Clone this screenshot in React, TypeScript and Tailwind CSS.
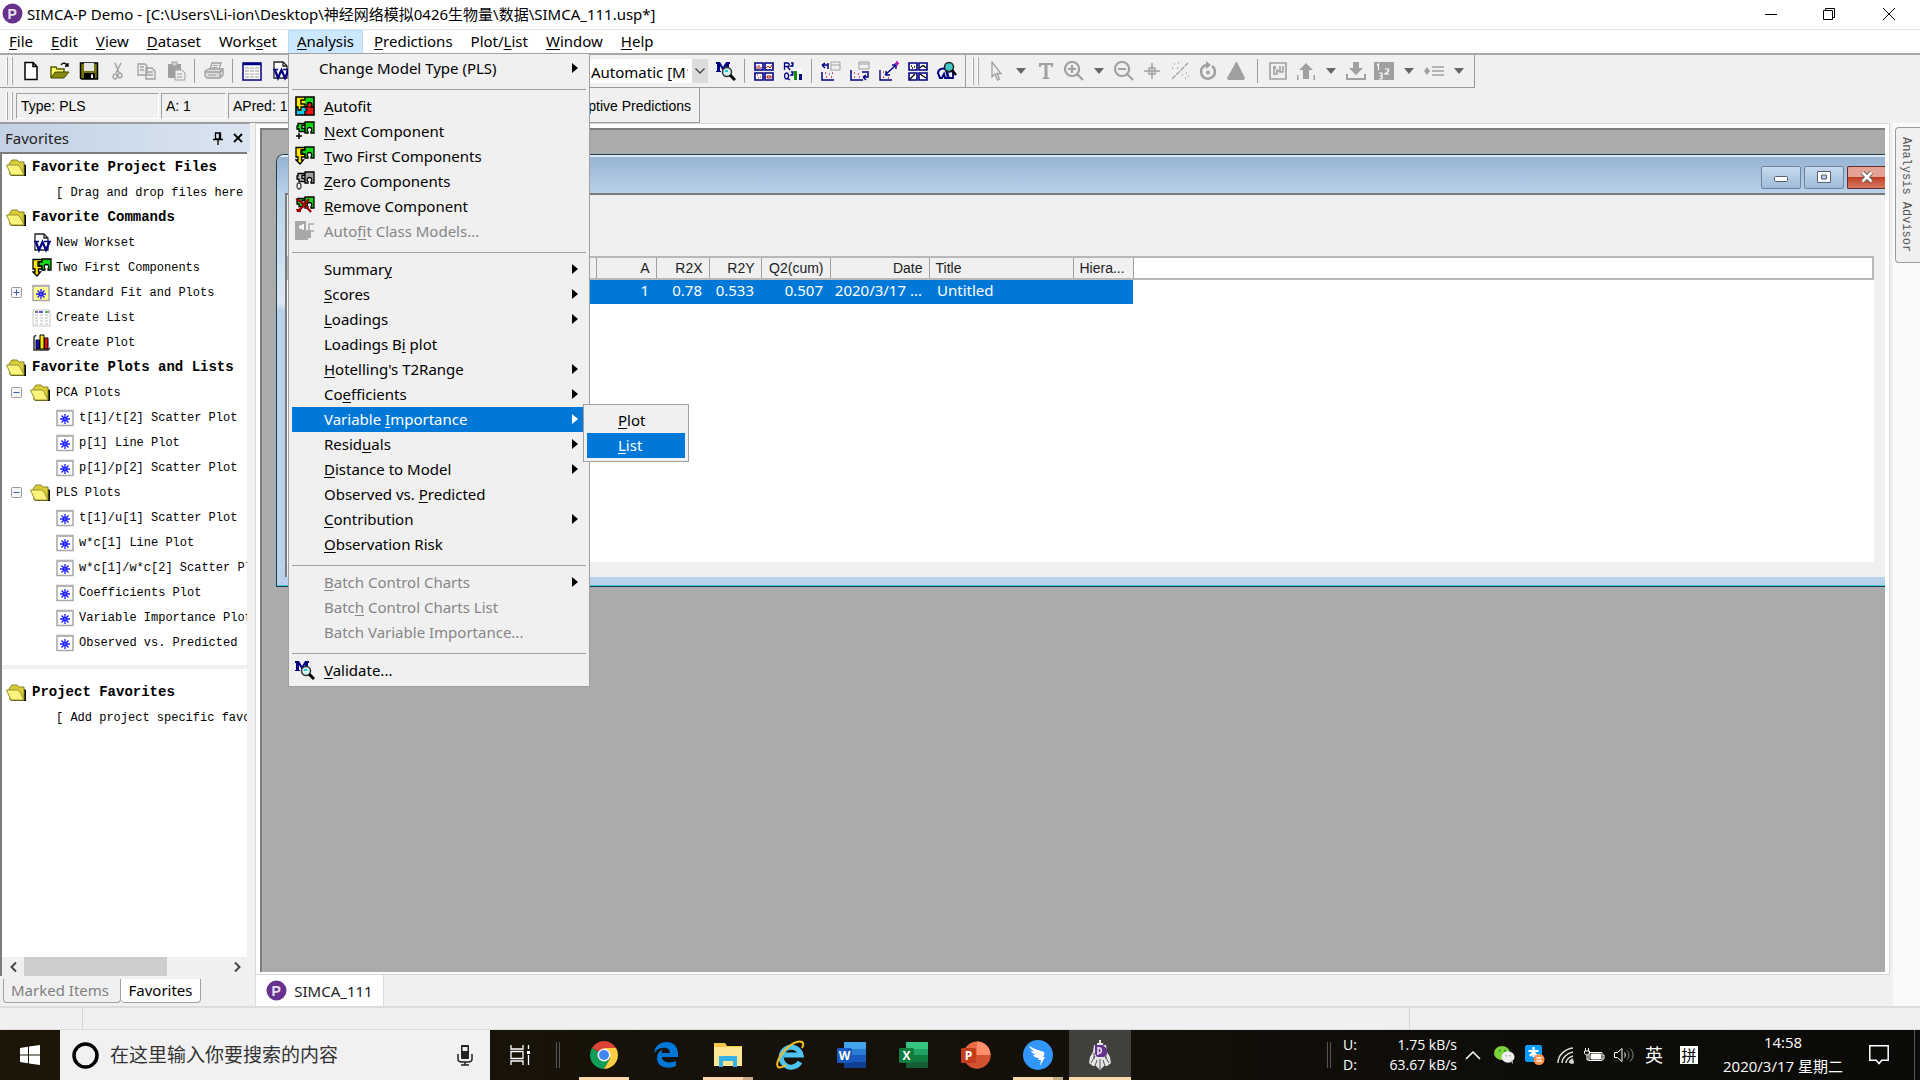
import type { ReactNode } from "react";
import clsx from "clsx";

const UI = "font-['Noto_Sans','Noto_Sans_CJK_SC',sans-serif]";
const NARROW = "font-['Liberation_Sans','Noto_Sans_CJK_SC',sans-serif]";
const MONO = "font-['Liberation_Mono','Noto_Sans_CJK_SC',monospace]";

/* ---------- data ---------- */

const MENUS = [
  "&File", "&Edit", "&View", "&Dataset", "Work&set", "&Analysis",
  "&Predictions", "Plot/&List", "&Window", "&Help",
];

type MenuItem = {
  label: string;
  icon?: ReactNode;
  sub?: boolean;
  disabled?: boolean;
  active?: boolean;
  outdent?: boolean;
};

const ANALYSIS_MENU: MenuItem[][] = [
  [{ label: "Change Model Type (PLS)", sub: true, outdent: true }],
  [
    { label: "&Autofit", icon: <PuzzleAll /> },
    { label: "&Next Component", icon: <PuzzleNext /> },
    { label: "&Two First Components", icon: <PuzzleTwo /> },
    { label: "&Zero Components", icon: <PuzzleZero /> },
    { label: "&Remove Component", icon: <PuzzleRemove /> },
    { label: "Auto&fit Class Models...", icon: <PuzzleClass />, disabled: true },
  ],
  [
    { label: "Summar&y", sub: true },
    { label: "&Scores", sub: true },
    { label: "&Loadings", sub: true },
    { label: "Loadings B&i plot" },
    { label: "&Hotelling's T2Range", sub: true },
    { label: "Co&efficients", sub: true },
    { label: "Variable &Importance", sub: true, active: true },
    { label: "Resid&uals", sub: true },
    { label: "&Distance to Model", sub: true },
    { label: "Observed vs. &Predicted" },
    { label: "&Contribution", sub: true },
    { label: "&Observation Risk" },
  ],
  [
    { label: "&Batch Control Charts", sub: true, disabled: true },
    { label: "Batc&h Control Charts List", disabled: true },
    { label: "Batch Variable Importance...", disabled: true },
  ],
  [{ label: "&Validate...", icon: <ModelLens /> }],
];

type TreeRow = {
  label: string;
  kind: "group" | "hint" | "command" | "folder" | "plot";
  icon?: ReactNode;
  toggle?: "plus" | "minus";
};

const FAVORITES: TreeRow[] = [
  { label: "Favorite Project Files", kind: "group" },
  { label: "[ Drag and drop files here ]", kind: "hint" },
  { label: "Favorite Commands", kind: "group" },
  { label: "New Workset", kind: "command", icon: <WorksetDoc /> },
  { label: "Two First Components", kind: "command", icon: <PuzzleTwo /> },
  { label: "Standard Fit and Plots", kind: "command", icon: <StarBox yellow />, toggle: "plus" },
  { label: "Create List", kind: "command", icon: <ListSheet /> },
  { label: "Create Plot", kind: "command", icon: <BarsIcon /> },
  { label: "Favorite Plots and Lists", kind: "group" },
  { label: "PCA Plots", kind: "folder", toggle: "minus" },
  { label: "t[1]/t[2] Scatter Plot", kind: "plot" },
  { label: "p[1] Line Plot", kind: "plot" },
  { label: "p[1]/p[2] Scatter Plot", kind: "plot" },
  { label: "PLS Plots", kind: "folder", toggle: "minus" },
  { label: "t[1]/u[1] Scatter Plot", kind: "plot" },
  { label: "w*c[1] Line Plot", kind: "plot" },
  { label: "w*c[1]/w*c[2] Scatter Plot", kind: "plot" },
  { label: "Coefficients Plot", kind: "plot" },
  { label: "Variable Importance Plot", kind: "plot" },
  { label: "Observed vs. Predicted", kind: "plot" },
];

const PROJECT_FAVORITES: TreeRow[] = [
  { label: "Project Favorites", kind: "group" },
  { label: "[ Add project specific favorites ]", kind: "hint" },
];

/* ---------- icons ---------- */

function Px({ children, size = 20 }: { children: ReactNode; size?: number }) {
  return (
    <svg width={size} height={size} viewBox="0 0 20 20" fill="none" className="shrink-0" aria-hidden="true">
      {children}
    </svg>
  );
}

function Piece({ left, right }: { left: string; right: string }) {
  return (
    <>
      <path d="M3 2.500h7v2H7v3h3v3H4V8H2V5h1z" fill={left} stroke="#000" strokeWidth="1.300" />
      <path d="M10 1h9v11h-3v-1.500c1.500-1 1-4-1.500-4s-3 3-1.500 4V12h-3z" fill={right} stroke="#000" strokeWidth="1.300" />
    </>
  );
}

function PuzzleAll() {
  return (
    <Px>
      <path d="M1 1h9v9H1z" fill="#ffe600" />
      <path d="M10 1h9v9h-9z" fill="#12d818" />
      <path d="M1 10h9v9H1z" fill="#19c8f0" />
      <path d="M10 10h9v9h-9z" fill="#f01616" />
      <path d="M2 10h5v5H5z" fill="#ffe600" />
      <circle cx="14.500" cy="9" r="2.500" fill="#f01616" />
      <path d="M10 1v3M10 8v3M10 15v4M10 4H6v4h4M1 11h2v3h3v-3h4M10 11h3c-2-2-1-4.500 1.500-4.500S18 9 16 11h3" stroke="#000" strokeWidth="1.300" />
      <path d="M10 13h2v2h-2" fill="#19c8f0" stroke="#000" />
      <path d="M1 1h18v18H1z" stroke="#000" strokeWidth="1.600" />
    </Px>
  );
}

function PuzzleNext() {
  return (
    <Px>
      <Piece left="#12d818" right="#12d818" />
      <path d="M4 12v6M1 15h6" stroke="#000" strokeWidth="1.500" />
    </Px>
  );
}

function PuzzleTwo() {
  return (
    <Px>
      <path d="M1 1.500h9v2.500H6v4h4v3H6.500v3h2L5 18l-4-4h2v-3H1z" fill="#ffe600" stroke="#000" strokeWidth="1.300" />
      <path d="M10 1h9v11h-3v-1.500c1.500-1 1-4-1.500-4s-3 3-1.500 4V12h-3V8H7V4h3z" fill="#12d818" stroke="#000" strokeWidth="1.300" />
    </Px>
  );
}

function PuzzleZero() {
  return (
    <Px>
      <Piece left="#c0c0c0" right="#a0a0a0" />
      <ellipse cx="4" cy="15" rx="2" ry="3" stroke="#444" strokeWidth="1.300" />
    </Px>
  );
}

function PuzzleRemove() {
  return (
    <Px>
      <Piece left="#12d818" right="#12d818" />
      <path d="M1 3c5 2 10 7 15 13M3 15C7 12 11 7 14 3" stroke="#a00000" strokeWidth="2.200" />
      <path d="M1 13h5v3H2z" fill="#a00000" />
    </Px>
  );
}

function PuzzleClass() {
  return (
    <Px>
      <path d="M0 0h11v9h5v8h-3v2H0z" fill="#a8a8a8" />
      <path d="M9 5H5v2h4M8 3v6" stroke="#fff" strokeWidth="1.500" />
      <path d="M19 3h-5v7h5" stroke="#a8a8a8" strokeWidth="1.500" />
    </Px>
  );
}

function ModelLens() {
  return (
    <Px>
      <path d="M0 1h4l3 5 3-5h4v2h-1v7h1v1h-5v-1h1V5L7 10 4 5v5h1v1H0v-1h1V3H0z" fill="#000080" />
      <circle cx="11" cy="11" r="4.500" fill="#d5f4f4" stroke="#333" strokeWidth="1.500" />
      <path d="M9 10h3" stroke="#20d0d0" strokeWidth="2" />
      <path d="M14 14l5 5" stroke="#000" strokeWidth="3" />
    </Px>
  );
}

function WorksetDoc() {
  return (
    <Px>
      <path d="M3 1h9l4 4v12H3z" fill="#fff" stroke="#222" strokeWidth="1.300" />
      <path d="M12 1v4h4" stroke="#222" strokeWidth="1.300" />
      <path d="M2 8.500h5M12 8.500h7" stroke="#000080" strokeWidth="1.300" />
      <path d="M4 9l3 8 3.500-8 3.500 8 3.500-8" stroke="#000080" strokeWidth="2.200" />
    </Px>
  );
}

function StarBox({ yellow }: { yellow?: boolean }) {
  return (
    <svg width="18" height="18" viewBox="0 0 18 18" fill="none" className="shrink-0" aria-hidden="true">
      <path d="M1 1.500h16v15H1z" fill={yellow ? "#ffff8c" : "#fff"} stroke="#a8a8a8" strokeWidth="1.500" />
      <path d="M1 2h16" stroke="#b4b4b4" strokeWidth="2" />
      <path d="M9 5v10M4 10h10M5.500 6.500l7 7M12.500 6.500l-7 7" stroke="#1414ff" strokeWidth="1.300" />
      <path d="M8.500 9.500h1v1h-1z" fill="#fff" />
    </svg>
  );
}

function ListSheet() {
  return (
    <Px>
      <path d="M1 2h17v16H1z" fill="#fff" stroke="#c8c8c8" />
      <path d="M3 4h3" stroke="#444" strokeWidth="1.500" />
      <path d="M7 4h4" stroke="#2020d0" strokeWidth="1.500" />
      <path d="M13 4h4" stroke="#20a020" strokeWidth="1.500" />
      <path d="M3 7h13M3 10h13M3 13h13M3 16h13" stroke="#bbb" strokeDasharray="3 2" />
    </Px>
  );
}

function BarsIcon() {
  return (
    <Px>
      <path d="M4 2L2 4v13h14l2-2" stroke="#333" strokeWidth="1.500" />
      <path d="M4 7h3.500v9H4z" fill="#1010d0" stroke="#000" />
      <path d="M8 2h4v14H8z" fill="#ffe600" stroke="#000" />
      <path d="M12.500 5H16v11h-3.500z" fill="#e01010" stroke="#000" />
    </Px>
  );
}

function FolderIcon() {
  return (
    <Px>
      <path d="M5 16h13V6l2 1v11H5z" fill="#000" />
      <path d="M3 6l3-4h5l2 2h5v13H4z" fill="#d8cc38" stroke="#8a8220" />
      <path d="M.5 7H12l2 2 4 8H5z" fill="#fbf47c" stroke="#9a9230" />
    </Px>
  );
}

function Toggle({ open }: { open: boolean }) {
  return (
    <svg width="11" height="11" viewBox="0 0 11 11" className="shrink-0" aria-hidden="true">
      <rect x=".5" y=".5" width="10" height="10" rx="1" fill="#f4f4f4" stroke="#9a9a9a" />
      <path d={open ? "M2.500 5.500h6" : "M2.500 5.500h6M5.500 2.500v6"} stroke="#3c5cb0" />
    </svg>
  );
}

function AppLogo({ className }: { className?: string }) {
  return (
    <svg width="21" height="21" viewBox="0 0 21 21" className={clsx("shrink-0", className)} aria-hidden="true">
      <circle cx="10.500" cy="10.500" r="10" fill="#66328e" />
      <text x="5.500" y="15.500" fontSize="14" fontWeight="700" fill="#e8e0f0" fontFamily="Liberation Sans, sans-serif">P</text>
    </svg>
  );
}

const G = "#a0a0a0";

const TOOL_ICONS: Record<string, ReactNode> = {
  New: <path d="M4 1.500h8l4 4v13H4zM12 1.500v4h4" fill="#fff" stroke="#000" strokeWidth="1.500" />,
  Open: (
    <>
      <path d="M1 17V6h5l1 2h7v3" fill="#ffff70" stroke="#5a5a00" strokeWidth="1.500" />
      <path d="M1 17l4-6h14l-5 6z" fill="#8a8a10" stroke="#4a4a00" />
      <path d="M11 4c2-3 5-2 7 1m0-3v3h-3" stroke="#000" strokeWidth="1.300" />
    </>
  ),
  Save: (
    <>
      <path d="M1.500 2h17v16h-16l-1-1z" fill="#747400" stroke="#000" strokeWidth="1.500" />
      <path d="M5 2h10v8H5z" fill="#e4e4e4" />
      <path d="M5 12h11v6H5z" fill="#000" />
      <path d="M12 13.500h2V17h-2z" fill="#fff" />
    </>
  ),
  Cut: <path d="M7 2l4 10M13 2L8 12m-1 1a2 2.500 0 1 0 .1 0M12 12a2 2.500 0 1 1-.1 0" stroke={G} strokeWidth="1.500" />,
  Copy: <path d="M1 3h7l2 2v9H1zM9 7h6l3 3v8H9zM3 6h4M3 9h4M11 11h5M11 14h5" fill="#ececec" stroke={G} strokeWidth="1.300" />,
  Paste: (
    <>
      <path d="M2 3h13v14H2z" fill={G} />
      <path d="M6 1h5v4H6z" fill="#d0d0d0" stroke={G} />
      <path d="M9 9h7l3 3v7H9zM11 13h5M11 16h5" fill="#eee" stroke={G} />
    </>
  ),
  Print: (
    <>
      <path d="M6 8l2-6h9l-2 6" fill="#eee" stroke={G} strokeWidth="1.300" />
      <path d="M1 10l4-2h14l-3 3H1zM1 11h15v6H3l-2-2zM16 11l3-2v5l-3 3" fill="#dcdcdc" stroke={G} strokeWidth="1.300" />
      <path d="M9 4.500h5M8 6.500h5M4 14h8" stroke={G} />
    </>
  ),
  Dataset: (
    <>
      <path d="M1 2h18v17H1z" fill="#fff" stroke="#000080" strokeWidth="1.500" />
      <path d="M1 3h18" stroke="#000080" strokeWidth="2.500" />
      <path d="M3 7h14M3 10h14M3 13h14M3 16h14" stroke="#999" strokeDasharray="4 1" />
    </>
  ),
  Overview: (
    <>
      <path d="M1 2h8v7H1zM11 2h8v7h-8zM1 12h8v7H1zM11 12h8v7h-8z" fill="#fff" stroke="#000080" strokeWidth="1.600" />
      <path d="M3 8V5M5 8V4M7 8V6M12 7l2-2 2 2 2-3" stroke="#a01010" />
      <path d="M3 14h1M6 16h1M4 17h1M13 15h4v2h-4z" stroke="#a01010" />
    </>
  ),
  R2Q2: (
    <>
      <path d="M10 8h9v11h-9z" fill="#fff" />
      <path d="M1.500 9V2h3a1.700 1.700 0 0 1 0 3.500h-3m3 0L7 9M8 2h2v1.500L8 5h2.500" stroke="#000080" strokeWidth="1.300" />
      <path d="M3.500 12a2 3 0 1 0 .1 0M4 17l3 2M8 11h2v1.500L8 14h2.500" stroke="#000080" strokeWidth="1.300" />
      <path d="M11 10h3v9h-3z" fill="#109010" />
      <path d="M16 13h3v6h-3z" fill="#000080" />
    </>
  ),
  Include: (
    <>
      <path d="M10 1h9v8h-9zM10 4h9" stroke={G} />
      <path d="M7 2v6M1 4h6M1 4l3-2M1 4l3 3M1 11v8h12" stroke="#000080" strokeWidth="1.500" />
      <path d="M4 12h1M8 13h1M5 16h1M10 16h1M11 12h1" stroke="#b02060" strokeWidth="1.500" />
    </>
  ),
  Exclude: (
    <>
      <path d="M9 1h10v7H9zM9 3h10" stroke={G} />
      <path d="M1 9v10h12M18 12v4h-5m0 0l3-2m-3 2l3 3M12 11h7" stroke="#000080" strokeWidth="1.500" />
      <path d="M4 12h1M8 13h1M4 16h1M9 16h1" stroke="#b02060" strokeWidth="1.500" />
    </>
  ),
  Trend: (
    <>
      <path d="M1 9v10h12M6 14L17 4M7 10v4h4M13 4h4v4" stroke="#000080" strokeWidth="1.400" />
      <path d="M18 0v5M15.500 2.500H20" stroke="#b010b0" strokeWidth="1.500" />
      <path d="M4 11h1M4 16h1M9 17h1" stroke="#b02060" strokeWidth="1.500" />
    </>
  ),
  Quad: (
    <>
      <path d="M1 2h8v7H1zM11 2h8v7h-8zM1 12h8v7H1zM11 12h8v7h-8z" fill="#fff" stroke="#000080" strokeWidth="1.600" />
      <path d="M3 5h1M6 6h1M4 7h1M12 7c2-3 4-3 6 0M2 18l5-5M12 13l6 4" stroke="#000" strokeWidth="1.300" />
    </>
  ),
  Gears: (
    <>
      <path d="M1 12c0-4 6-6 8-3l2 8H8l-1-4-2 4H3z" stroke="#000080" strokeWidth="2" />
      <path d="M10 11l6-1v7h-4z" stroke="#000080" strokeWidth="1.800" />
      <circle cx="12" cy="6" r="4.500" fill="#40c8c8" stroke="#222" strokeWidth="1.500" />
      <path d="M15 9l4 5" stroke="#000" strokeWidth="2.500" />
    </>
  ),
  Pointer: <path d="M6 1v15l3-3 2.500 6 2-1-2.500-5.500h4z" stroke={G} strokeWidth="1.300" />,
  Text: <path d="M3 2h14v4h-1.500L14.500 4H11.500v12l2 1v1h-7v-1l2-1V4H5.500L4.500 6H3z" fill={G} />,
  "Zoom in": <path d="M8 1a7 7 0 1 0 .1 0M8 4v8M4 8h8M13 13l6 6" stroke={G} strokeWidth="2.200" />,
  "Zoom out": <path d="M8 1a7 7 0 1 0 .1 0M4 8h8M13 13l6 6" stroke={G} strokeWidth="2.200" />,
  Crosshair: <path d="M10 2v16M2 10h16M7 7h6v6H7z" stroke={G} strokeWidth="1.500" />,
  Points: (
    <>
      <path d="M2 18L18 2" stroke={G} strokeWidth="1.300" strokeDasharray="5 1" />
      <path d="M4 3h1M8 2h1M2 7h1M7 7h1M12 14h1M16 12h1M15 17h1M18 15h1" stroke={G} strokeWidth="1.500" />
    </>
  ),
  Rotate: (
    <>
      <path d="M8 4a7 7 0 1 0 6 1" stroke={G} strokeWidth="2.500" />
      <path d="M8 0l5 4-5 4z" fill={G} />
      <circle cx="10" cy="11.500" r="2" fill={G} />
    </>
  ),
  Cone: <path d="M10 1h1l8 16-1 2H2l-1-2z" fill={G} />,
  "Save plot": <path d="M2 2h16v16H2zM6 5v8h3V8M9 10h3M12 5v6h3V5M7 5v3" stroke={G} strokeWidth="1.600" />,
  Raise: <path d="M10 2l7 7h-4v9H7V9H3zM1 14h1.500v5H1zM17.500 14H19v5h-1.500z" fill={G} />,
  Lower: <path d="M10 14l7-7h-4V1H7v6H3zM0 13h2v4h16v-4h2v6H0z" fill={G} />,
  Numbers: (
    <>
      <path d="M0 1h20v18H0z" fill={G} />
      <path d="M3 4l1.500-1v6M11 8h3.500v2L11 13h4M5 12h3v6H5M5.500 15H8" stroke="#fff" strokeWidth="1.200" />
    </>
  ),
  Legend: (
    <>
      <path d="M3 6l3 4-3 4-3-4z" fill={G} />
      <path d="M8 6h12M8 10h12M8 14h12" stroke={G} strokeWidth="1.600" />
    </>
  ),
};

/* ---------- small pieces ---------- */

// "&File" underlines the F
function Mnemonic({ text }: { text: string }) {
  const at = text.indexOf("&");
  if (at < 0) return <>{text}</>;
  return (
    <>
      {text.slice(0, at)}
      <span className="underline underline-offset-2">{text[at + 1]}</span>
      {text.slice(at + 2)}
    </>
  );
}

function Tool({ name, wide }: { name: string; wide?: boolean }) {
  return (
    <button aria-label={name} className={clsx("h-7 flex items-center justify-center shrink-0", wide ? "w-[29px]" : "w-7")}>
      {name === "Workset" ? <WorksetDoc /> : name === "Model" ? <ModelLens /> : <Px>{TOOL_ICONS[name]}</Px>}
    </button>
  );
}

function DropArrow({ name }: { name: string }) {
  return (
    <button aria-label={name} className="w-[22px] h-7 flex items-center justify-center shrink-0">
      <svg width="10" height="6" viewBox="0 0 10 6" aria-hidden="true"><path d="M0 0h10L5 6z" fill="#666" /></svg>
    </button>
  );
}

function Sep({ wide }: { wide?: boolean }) {
  return (
    <div className={clsx("flex justify-center shrink-0", wide ? "w-[14px]" : "w-[9px]")}>
      <div className="w-px h-6 bg-[#9a9a9a]" />
    </div>
  );
}

function Grip() {
  return (
    <div className="flex gap-[3px] self-stretch py-0.5 shrink-0">
      <div className="w-0.5 bg-white border-r border-[#a8a8a8]" />
      <div className="w-0.5 bg-white border-r border-[#a8a8a8]" />
    </div>
  );
}

/* ---------- menus ---------- */

function Submenu() {
  return (
    <ul className="absolute left-[291px] -top-[3px] z-20 w-[106px] bg-[#f0f0f0] border border-[#a0a0a0] p-[3px] text-black">
      <li>
        <button className="w-full h-[25px] pl-[31px] pb-0.5 text-left"><Mnemonic text="&Plot" /></button>
      </li>
      <li>
        <button className="w-full h-[25px] pl-[31px] pb-0.5 text-left bg-[#0078d7] text-white"><Mnemonic text="&List" /></button>
      </li>
    </ul>
  );
}

function AnalysisMenu() {
  return (
    <div className="absolute top-full left-0 z-10 w-[302px] bg-[#f0f0f0] border border-[#a0a0a0] pt-0.5 pb-[3px] px-[3px] text-black">
      {ANALYSIS_MENU.map((group, i) => (
        <ul key={i} className={clsx(i > 0 && "border-t border-[#a0a0a0] mt-2 pt-1")}>
          {group.map((item) => (
            <li key={item.label} className="relative">
              <button
                disabled={item.disabled}
                className={clsx(
                  "w-full h-[25px] flex items-center pl-[3px] pr-2 pb-0.5 text-left",
                  item.active && "bg-[#0078d7] text-white",
                  item.disabled && "text-[#868686]",
                )}
              >
                <span className={item.outdent ? "w-6" : "w-[29px]"}>{item.icon}</span>
                <span className="flex-1"><Mnemonic text={item.label} /></span>
                {item.sub && (
                  <svg width="6" height="10" viewBox="0 0 6 10" aria-hidden="true">
                    <path d="M0 0v10l6-5z" fill={item.active ? "#fff" : "#000"} />
                  </svg>
                )}
              </button>
              {item.active && <Submenu />}
            </li>
          ))}
        </ul>
      ))}
    </div>
  );
}

/* ---------- top ---------- */

function TitleBar() {
  return (
    <header className="h-[29px] bg-white flex items-center pl-0.5 pb-0.5 shrink-0">
      <AppLogo />
      <h1 className="ml-1 text-[15px] leading-5 text-black whitespace-nowrap">
        SIMCA-P Demo - [C:\Users\Li-ion\Desktop\神经网络模拟0426生物量\数据\SIMCA_111.usp*]
      </h1>
      <div className="ml-auto flex">
        <button aria-label="Minimize" className="w-[58px] h-7 flex items-center justify-center">
          <svg width="12" height="12" viewBox="0 0 12 12"><path d="M0 6.500h12" stroke="#000" /></svg>
        </button>
        <button aria-label="Restore" className="w-[58px] h-7 flex items-center justify-center">
          <svg width="12" height="12" viewBox="0 0 12 12" fill="none" stroke="#000">
            <path d="M.5 2.500h9v9h-9zM2.500 2.500v-2h9v9h-2" />
          </svg>
        </button>
        <button aria-label="Close" className="w-[62px] h-7 flex items-center justify-center">
          <svg width="12" height="12" viewBox="0 0 12 12"><path d="M0 0l12 12M12 0L0 12" stroke="#000" /></svg>
        </button>
      </div>
    </header>
  );
}

function MenuBar() {
  return (
    <nav className="h-6 bg-white border-t border-[#e4e4e4] flex shrink-0 text-[15px] leading-5 text-black">
      {MENUS.map((label) => {
        const open = label === "&Analysis";
        return (
          <div key={label} className={clsx("relative", open && "mx-0.5")}>
            <button className={clsx("h-[23px] px-2 pb-1 border", open ? "bg-[#cce8ff] border-[#b4dcfa] border-b-0" : "border-transparent")}>
              <Mnemonic text={label} />
            </button>
            {open && <AnalysisMenu />}
          </div>
        );
      })}
    </nav>
  );
}

function Toolbars() {
  return (
    <div className="shrink-0 border-t-2 border-[#a8a8a8]">
      <div className="flex h-[33px]">
        <div className="flex items-center pl-1.5 border-b border-r border-[#9a9a9a] w-[966px] shrink-0">
          <Grip />
          <div className="flex items-center ml-[3px]">
            {["New", "Open", "Save", "Cut", "Copy", "Paste"].map((n) => <Tool key={n} name={n} wide />)}
            <Sep />
            <Tool name="Print" wide />
            <Sep />
            <Tool name="Dataset" wide />
            <Tool name="Workset" wide />
          </div>
          <div className="ml-auto flex items-center pr-1">
            <div className="relative mr-[3px]">
              <select
                aria-label="Scaling"
                className="appearance-none w-[147px] h-6 bg-white pl-[30px] pt-0.5 pr-5 text-[15px] leading-5 text-black overflow-hidden"
              >
                <option>Automatic [M1]</option>
              </select>
              <span className="absolute right-0 top-0 w-4 h-6 bg-[#dcdcdc] flex items-center justify-center pointer-events-none">
                <svg width="10" height="6" viewBox="0 0 10 6" fill="none"><path d="M.5.5L5 5 9.500.5" stroke="#444" strokeWidth="1.300" /></svg>
              </span>
            </div>
            <Tool name="Model" wide />
            <Sep />
            <Tool name="Overview" wide />
            <Tool name="R2Q2" wide />
            <Sep />
            {["Include", "Exclude", "Trend", "Quad", "Gears"].map((n) => <Tool key={n} name={n} wide />)}
          </div>
        </div>
        <div className="flex items-center pl-1.5 pr-1 border-b border-r border-[#9a9a9a] shrink-0">
          <Grip />
          <div className="flex items-center ml-[3px]">
            <Tool name="Pointer" />
            <DropArrow name="Pointer options" />
            <Tool name="Text" />
            <Tool name="Zoom in" />
            <DropArrow name="Zoom options" />
            {["Zoom out", "Crosshair", "Points", "Rotate", "Cone"].map((n) => <Tool key={n} name={n} />)}
            <Sep wide />
            <Tool name="Save plot" />
            <Tool name="Raise" />
            <DropArrow name="Raise options" />
            <Tool name="Lower" />
            <Tool name="Numbers" />
            <DropArrow name="Number options" />
            <Tool name="Legend" />
            <DropArrow name="Legend options" />
          </div>
        </div>
      </div>
      <div className={clsx("flex items-center h-[35px] w-[700px] pt-0.5 pl-1.5 border-b border-r border-[#9a9a9a] text-[14px] leading-4 text-black", NARROW)}>
        <Grip />
        <div className="flex ml-[3px] gap-0.5 flex-1">
          {[["Type: PLS", "w-[143px]"], ["A: 1", "w-[65px]"], ["APred: 1", "w-[100px]"]].map(([text, w]) => (
            <div key={text} className={clsx("h-[26px] flex items-center pl-1 border-t border-l border-[#a0a0a0] border-r border-r-white border-b border-b-white", w)}>
              {text}
            </div>
          ))}
          <div className="h-[26px] flex-1 flex items-center justify-end pr-2">Adaptive Predictions</div>
        </div>
      </div>
    </div>
  );
}

/* ---------- favorites ---------- */

function TreeList({ rows }: { rows: TreeRow[] }) {
  return (
    <ul>
      {rows.map((row) => (
        <li
          key={row.label}
          className={clsx(
            "h-[25px] flex items-center whitespace-nowrap",
            row.kind === "group" ? "text-[14px] font-bold pl-1" : "text-[12px]",
            row.kind === "hint" && "pl-[54px]",
            (row.kind === "command" || row.kind === "folder") && "pl-[9px]",
            row.kind === "plot" && "pl-[54px]",
          )}
        >
          {(row.kind === "command" || row.kind === "folder") && (
            <span className="w-[19px] shrink-0">{row.toggle && <Toggle open={row.toggle === "minus"} />}</span>
          )}
          {row.kind === "group" && <span className="mr-1.5"><FolderIcon /></span>}
          {row.kind === "folder" && <span className="w-[26px] shrink-0"><FolderIcon /></span>}
          {row.kind === "command" && <span className="w-[26px] pl-0.5 shrink-0">{row.icon}</span>}
          {row.kind === "plot" && <span className="w-[23px] shrink-0"><StarBox /></span>}
          <span>{row.label}</span>
        </li>
      ))}
    </ul>
  );
}

function FavoritesPane() {
  return (
    <aside className="w-[250px] shrink-0 flex flex-col border-t border-[#a0a0a0]">
      <div className="h-7 shrink-0 flex items-center pl-[5px] pr-0.5 bg-linear-to-r from-[#c2d2e4] to-[#dbe5f1] text-[15px] leading-5 text-[#222]">
        <h2>Favorites</h2>
        <button aria-label="Pin" className="ml-auto w-5 h-5 flex items-center justify-center">
          <svg width="10" height="13" viewBox="0 0 10 13" fill="none" stroke="#000" strokeWidth="1.300">
            <path d="M2.500 1h5v6h-5zM0 7.500h10M5 8v5M6.500 1v6" />
          </svg>
        </button>
        <button aria-label="Close favorites" className="w-5 h-5 flex items-center justify-center">
          <svg width="10" height="10" viewBox="0 0 10 10"><path d="M1 1l8 8M9 1L1 9" stroke="#000" strokeWidth="1.800" /></svg>
        </button>
      </div>
      <div className={clsx("flex-1 min-h-0 flex flex-col overflow-hidden bg-white text-black border-t-2 border-l-2 border-[#7c7c7c] mr-[3px] pt-px", MONO)}>
        <TreeList rows={FAVORITES} />
        <div className="mt-[10px] mb-[11px] h-1 bg-[#f0f0f0] shrink-0" />
        <TreeList rows={PROJECT_FAVORITES} />
        <div className="mt-auto h-[19px] flex items-center bg-[#f0f0f0] shrink-0">
          <button aria-label="Scroll left" className="w-[22px] flex justify-center">
            <svg width="7" height="10" viewBox="0 0 7 10" fill="none"><path d="M6 .5L1.500 5 6 9.500" stroke="#444" strokeWidth="2" /></svg>
          </button>
          <div className="flex-1 h-full"><div className="w-[143px] h-full bg-[#cdcdcd]" /></div>
          <button aria-label="Scroll right" className="w-5 flex justify-center">
            <svg width="7" height="10" viewBox="0 0 7 10" fill="none"><path d="M1 .5L5.500 5 1 9.500" stroke="#444" strokeWidth="2" /></svg>
          </button>
        </div>
      </div>
      <div className="h-[30px] shrink-0 flex items-start pl-[3px] pt-[3px] text-[15px] leading-5">
        <button className="h-6 w-[118px] pb-0.5 pr-1 text-[#808080] border border-t-0 border-[#a0a0a0] rounded-b">Marked Items</button>
        <button className="h-6 w-20 pb-0.5 bg-white text-black border border-t-0 border-l-0 border-[#a0a0a0] rounded-b">Favorites</button>
      </div>
    </aside>
  );
}

/* ---------- project window ---------- */

const COLUMNS = [
  { name: "A", value: "1", right: true },
  { name: "R2X", value: "0.78", right: true },
  { name: "R2Y", value: "0.533", right: true },
  { name: "Q2(cum)", value: "0.507", right: true },
  { name: "Date", value: "2020/3/17 ...", right: true },
  { name: "Title", value: "Untitled", right: false },
  { name: "Hiera...", value: "", right: false },
];

function ProjectWindow() {
  return (
    <section className="ml-[14px] mt-6 border-t border-l border-b border-[#1d4048] rounded-tl-lg overflow-hidden">
      <div className="border-b border-[#3fc4dc] bg-[#b9d1ea]">
        <div className="h-[38px] pt-1 flex items-center justify-end gap-[3px] border-t-2 border-[#dfe9f4] bg-linear-to-b from-[#98b4d4] to-[#b9d1ea]">
          <button aria-label="Minimize project" className="w-10 h-[23px] rounded-xs border border-[#6d84a0] bg-linear-to-b from-[#c8daee] to-[#a0bbda] flex items-center justify-center pt-1">
            <svg width="14" height="6" viewBox="0 0 14 6"><rect x=".5" y=".5" width="13" height="5" rx="1" fill="#fff" stroke="#56606e" /></svg>
          </button>
          <button aria-label="Maximize project" className="w-10 h-[23px] rounded-xs border border-[#6d84a0] bg-linear-to-b from-[#c8daee] to-[#a0bbda] flex items-center justify-center">
            <svg width="14" height="12" viewBox="0 0 14 12"><path d="M.5.5h13v11H.5zM4.500 4v4h5V4z" fill="#fff" fillRule="evenodd" stroke="#56606e" /></svg>
          </button>
          <button aria-label="Close project" className="w-[38px] h-[23px] rounded-l-xs border border-r-0 border-[#6a2a2a] bg-linear-to-b from-[#e6a294] from-45% via-[#bf3f24] via-50% to-[#d47a62] flex items-center justify-center">
            <svg width="14" height="12" viewBox="0 0 14 12"><path d="M2.500 1.500l9 9M11.500 1.500l-9 9" stroke="#5a4a50" strokeWidth="4.500" /><path d="M2.500 1.500l9 9M11.500 1.500l-9 9" stroke="#fff" strokeWidth="2.800" /></svg>
          </button>
        </div>
        <div className="flex">
          <div className="w-2 shrink-0 bg-linear-to-b from-[#b9d1ea] via-[#dce8f6] via-28% to-[#b9d1ea] to-30%" />
          <div className="flex-1 mb-2 border-t-2 border-l-2 border-[#7a7a7a] bg-[#f0f0f0] pt-[61px] pr-[11px] pb-[15px]">
            <div className="h-[306px] bg-white">
              <table className="w-full table-fixed border-collapse text-[15px] leading-5">
                <colgroup>
                  <col className="w-[308px]" />
                  <col className="w-[60px]" />
                  <col className="w-[53px]" />
                  <col className="w-[52px]" />
                  <col className="w-[69px]" />
                  <col className="w-[99px]" />
                  <col className="w-[144px]" />
                  <col className="w-[60px]" />
                  <col />
                </colgroup>
                <thead className={clsx("border-2 border-[#b8b8b8] text-[14px] text-[#222]", NARROW)}>
                  <tr className="h-[22px]">
                    <th className="p-0 bg-[#f0f0f0] border-r border-[#a0a0a0]" />
                    {COLUMNS.map((c) => (
                      <th
                        key={c.name}
                        className={clsx("p-0 px-1.5 bg-[#f0f0f0] border-r border-[#a0a0a0] font-normal whitespace-nowrap leading-4", c.right ? "text-right" : "text-left")}
                      >
                        {c.name}
                      </th>
                    ))}
                    <th className="p-0" />
                  </tr>
                </thead>
                <tbody>
                  <tr className="h-[25px] text-white">
                    <td className="p-0 bg-[#0078d7]" />
                    {COLUMNS.map((c) => (
                      <td key={c.name} className={clsx("p-0 pb-1 bg-[#0078d7] whitespace-nowrap", c.right ? "text-right pr-[7px]" : "text-left pl-2")}>
                        {c.value}
                      </td>
                    ))}
                    <td className="p-0" />
                  </tr>
                </tbody>
              </table>
            </div>
          </div>
        </div>
      </div>
    </section>
  );
}

function Workspace() {
  return (
    <main className="flex-1 min-w-0 flex flex-col ml-[5px]">
      <div className="flex-1 min-h-0 flex flex-col border border-[#d8d8d8] bg-white p-1 pb-0.5">
        <div className="flex-1 min-h-0 overflow-hidden bg-[#ababab] border-t-2 border-l-2 border-[#7c7c7c]">
          <ProjectWindow />
        </div>
      </div>
      <div className="h-[31px] shrink-0 flex">
        <button className="h-full w-[129px] bg-white border-r border-l border-[#dcdcdc] flex items-center justify-center gap-[7px] text-[15px] leading-5 text-[#222]">
          <AppLogo />
          SIMCA_111
        </button>
      </div>
    </main>
  );
}

/* ---------- taskbar ---------- */

function Office({ letter, dark, shades, round }: { letter: string; dark: string; shades: string[]; round?: boolean }) {
  return (
    <svg width="30" height="28" viewBox="0 0 30 28" aria-hidden="true">
      {round ? (
        <>
          <circle cx="16" cy="14" r="13.500" fill={shades[0]} />
          <path d="M16 .5A13.500 13.500 0 0 1 29.500 14H16z" fill={shades[1]} />
          <path d="M29.500 14a13.500 13.500 0 0 1-27 0z" fill={shades[2]} />
        </>
      ) : (
        <>
          <path d="M7 1h22v7H7z" fill={shades[0]} />
          <path d="M7 8h22v6H7z" fill={shades[1]} />
          <path d="M7 14h22v7H7z" fill={shades[2]} />
          <path d="M7 21h22v6H7z" fill={shades[3]} />
        </>
      )}
      <rect x="0" y="7" width="15" height="15" rx="1.500" fill={dark} />
      <text x="7.500" y="18.500" textAnchor="middle" fontSize="12" fontWeight="700" fill="#fff" fontFamily="Open Sans, sans-serif">{letter}</text>
    </svg>
  );
}

const TASKS: { name: string; icon: ReactNode; running?: "one" | "many" | "active" }[] = [
  {
    name: "Chrome",
    running: "one",
    icon: (
      <svg width="28" height="28" viewBox="0 0 28 28">
        <path d="M14 14L1.900 7A14 14 0 0 1 26.100 7z" fill="#db4437" />
        <path d="M14 14L1.900 7A14 14 0 0 0 14 28l6-10.500z" fill="#0f9d58" />
        <path d="M14 7h12.100A14 14 0 0 1 14 28l6-10.500z" fill="#ffcd40" />
        <circle cx="14" cy="14" r="6.500" fill="#f1f1f1" />
        <circle cx="14" cy="14" r="5" fill="#4285f4" />
      </svg>
    ),
  },
  {
    name: "Edge",
    icon: (
      <svg width="26" height="28" viewBox="0 0 26 28">
        <path d="M1 12C2 5 7 1 13.500 1 21 1 25 6 25 13v3H9c0 5 7 7 14 4v5c-9 4-19 1-19-8 0-4 2-7 6-9-1 1-1.500 3-1.500 4H17c0-7-11-7-16 0z" fill="#0078d7" />
      </svg>
    ),
  },
  {
    name: "File Explorer",
    running: "many",
    icon: (
      <svg width="28" height="26" viewBox="0 0 28 26">
        <path d="M0 1h11l2 3h15v20H0z" fill="#f8c843" />
        <path d="M0 5h28v19H0z" fill="#ffe694" />
        <path d="M5 25V14h18v11h-4v-6H9v6z" fill="#35b1e8" />
      </svg>
    ),
  },
  {
    name: "Internet Explorer",
    icon: (
      <svg width="30" height="30" viewBox="0 0 30 30" fill="none">
        <path d="M25 22A10 10 0 1 1 26 15H9" stroke="#4fc3f0" strokeWidth="5" />
        <path d="M3 27C-2 20 18-2 27 2c2 1 1 4 0 6M3 27c2 1 5 0 8-2" stroke="#f5bd1f" strokeWidth="2" />
      </svg>
    ),
  },
  { name: "Word", icon: <Office letter="W" dark="#185abd" shades={["#41a5ee", "#2b7cd3", "#185abd", "#103f91"]} /> },
  { name: "Excel", icon: <Office letter="X" dark="#107c41" shades={["#33c481", "#21a366", "#107c41", "#185c37"]} /> },
  { name: "PowerPoint", icon: <Office letter="P" dark="#c43e1c" shades={["#ed6c47", "#ff8f6b", "#d35230"]} round /> },
  {
    name: "DingTalk",
    running: "many",
    icon: (
      <svg width="30" height="30" viewBox="0 0 30 30">
        <circle cx="15" cy="15" r="15" fill="#3296fa" />
        <path d="M6 6c5 3 10 4 15 6 1 1 0 3-1 5h2l-5 9 1-6h-3l1-2c-3 0-5-1-6-3l3 0c-3-1-5-3-5-4l4 .5C9 10 7 9 6 6z" fill="#fff" />
      </svg>
    ),
  },
  {
    name: "SIMCA",
    running: "active",
    icon: (
      <svg width="24" height="30" viewBox="0 0 24 30">
        <path d="M11 0h2v3h2v2h3l1 7 3 5 1 6-4 3h-3l-4 4-4-4H5l-4-3 1-6 3-5 1-7h3V3h2z" fill="#e4e4e4" />
        <path d="M7 16l-4 7M17 16l4 7M9 20l-2 6M15 20l2 6M12 19v10M6 13v6M18 13v6" stroke="#555" fill="none" />
        <path d="M7 5h8l4 4v5l-3 3H9l-2-3z" fill="#66328e" />
        <path d="M10 7v8M10 8h2a3 3 0 0 1 0 5h-2" stroke="#e8e0f0" strokeWidth="1.600" fill="none" />
      </svg>
    ),
  },
];

function Taskbar() {
  return (
    <footer className="h-[50px] shrink-0 flex bg-linear-to-r from-[#1c1508] via-[#15110a] via-50% to-[#0a0a08] text-white">
      <button aria-label="Start" className="w-[60px] flex items-center justify-center">
        <svg width="20" height="20" viewBox="0 0 20 20" fill="#fff">
          <path d="M0 3l8-1.200v7.700H0zM9 1.600L20 0v9.500H9zM0 10.500h8v7.700L0 17zM9 10.500h11V20L9 18.400z" />
        </svg>
      </button>
      <label className="w-[430px] flex items-center bg-[#f1f1f1] pl-3 pr-4">
        <svg width="27" height="27" viewBox="0 0 27 27" className="shrink-0" aria-label="Cortana">
          <circle cx="13.500" cy="13.500" r="11.500" fill="none" stroke="#000" strokeWidth="3.500" />
        </svg>
        <input
          type="text"
          aria-label="搜索"
          placeholder="在这里输入你要搜索的内容"
          className="flex-1 min-w-0 ml-[11px] bg-transparent text-[19px] leading-6 placeholder:text-[#333] outline-none"
        />
        <svg width="18" height="22" viewBox="0 0 18 22" fill="none" aria-label="Microphone">
          <rect x="5" y="1" width="8" height="14" rx="1" fill="#222" />
          <path d="M6.500 3h5v4h-5z" fill="#f1f1f1" />
          <path d="M2 10v5c0 2 2 3 4 3h6c2 0 4-1 4-3v-5M9 18v3M5 21h8" stroke="#222" strokeWidth="1.500" />
        </svg>
      </label>
      <button aria-label="Task view" className="w-[60px] flex items-center justify-center">
        <svg width="21" height="20" viewBox="0 0 21 20" fill="none" stroke="#fff" strokeWidth="1.300">
          <path d="M1 0v4h12V0M1 20v-4h12v4M1 6.500h12v7H1zM18.500 0v4M18.500 10v10" />
          <path d="M17 6h3v3h-3z" fill="#fff" stroke="none" />
        </svg>
      </button>
      <div className="w-[23px] flex items-center gap-0.5 pl-1.5">
        <div className="w-px h-[26px] bg-[#555]" />
        <div className="w-px h-[26px] bg-[#555]" />
      </div>
      <div className="flex">
        {TASKS.map((t) => (
          <button
            key={t.name}
            aria-label={t.name}
            className={clsx("relative w-[62px] flex items-center justify-center", t.running === "active" && "bg-[#42403d]")}
          >
            {t.icon}
            {t.running && (
              <span className={clsx("absolute bottom-0 h-[3px] flex", t.running === "active" ? "inset-x-0" : "inset-x-1.5")}>
                <span className="flex-1 bg-[#fcd9ad]" />
                {t.running === "many" && <span className="w-2.5 bg-[#c8ab88]" />}
              </span>
            )}
          </button>
        ))}
      </div>
      <div className="ml-auto flex items-center text-[15px] leading-5 font-['Open_Sans','Noto_Sans_CJK_SC',sans-serif]">
        <div className="flex gap-0.5 mr-3">
          <div className="w-px h-[26px] bg-[#555]" />
          <div className="w-px h-[26px] bg-[#555]" />
        </div>
        <dl className="w-[114px] grid grid-cols-[auto_1fr] text-[14px]">
          <dt>U:</dt>
          <dd className="text-right">1.75 kB/s</dd>
          <dt>D:</dt>
          <dd className="text-right">63.67 kB/s</dd>
        </dl>
        <button aria-label="Show hidden icons" className="w-8 flex justify-center">
          <svg width="16" height="10" viewBox="0 0 16 10" fill="none"><path d="M1 9l7-7 7 7" stroke="#fff" strokeWidth="1.500" /></svg>
        </button>
        <button aria-label="WeChat" className="w-[30px] flex justify-center">
          <svg width="21" height="18" viewBox="0 0 21 18">
            <ellipse cx="8" cy="7" rx="8" ry="7" fill="#7bd23a" />
            <ellipse cx="14" cy="11" rx="6.500" ry="5.800" fill="#eee" />
            <path d="M5 4h1.500v1.500H5zM10 4h1.500v1.500H10z" fill="#274" />
            <path d="M11.500 9h1.500v1.500h-1.500zM15.500 9H17v1.500h-1.500zM16 15l3 3v-4z" fill="#aaa" />
          </svg>
        </button>
        <button aria-label="Sync" className="w-[31px] flex justify-center">
          <svg width="20" height="20" viewBox="0 0 20 20">
            <rect width="17" height="17" rx="2" fill="#0a9bff" />
            <path d="M8.500 2v10M3.500 6h10M5 11l3.500-4L12 11" stroke="#fff" strokeWidth="2.200" fill="none" />
            <circle cx="14" cy="14.500" r="5.500" fill="#ff9350" />
            <path d="M11.500 13h5M11.500 16h5" stroke="#fff" strokeWidth="1.300" />
          </svg>
        </button>
        <button aria-label="Network" className="w-[30px] flex justify-center">
          <svg width="17" height="17" viewBox="0 0 17 17" fill="none" stroke="#ddd" strokeWidth="1.400">
            <path d="M1 16C1 8 8 2 16 1M5 16c0-5 5-10 11-11M9 16c0-3 3-6 7-7M12.500 16c0-2 1-3 3.500-4" />
            <path d="M14 14h2v2h-2z" fill="#fff" />
          </svg>
        </button>
        <button aria-label="Battery" className="w-[28px] flex justify-center">
          <svg width="21" height="14" viewBox="0 0 21 14" fill="none" stroke="#fff">
            <path d="M5 4.500h13v8H5zM18.500 7h1.500v4h-1.500" />
            <path d="M7 6h9.500v5H7z" fill="#fff" />
            <path d="M1.500 0v3M4.500 0v3M.500 3h5v2c0 1-1 2-2.500 2S.500 6 .500 5zM3 7v5h2" />
          </svg>
        </button>
        <button aria-label="Volume" className="w-[31px] flex justify-center">
          <svg width="20" height="16" viewBox="0 0 20 16" fill="none" stroke="#fff">
            <path d="M.5 5.500h3L8 1.500v13l-4.500-4h-3z" />
            <path d="M10.500 5.500c1 1 1 4 0 5" />
            <path d="M13 3.500c2.500 2 2.500 7 0 9M16 1.500c4 3.500 4 9.500 0 13" stroke="#888" />
          </svg>
        </button>
        <button className="w-[30px] text-[18px] text-center">英</button>
        <button className="ml-[11px] w-[18px] h-[18px] bg-white text-black text-[15px] leading-[18px] text-center">拼</button>
        <button className="w-[136px] ml-[17px] h-[50px] pb-0.5 text-[15px] leading-6 text-center whitespace-nowrap">
          <span className="block">14:58</span>
          <span className="block">2020/3/17 星期二</span>
        </button>
        <button aria-label="Notifications" className="w-14 flex justify-center">
          <svg width="20" height="20" viewBox="0 0 20 20" fill="none"><path d="M.8.800h18.400v14.500h-6.500L10 18.500l-2.700-3.200H.8z" stroke="#fff" strokeWidth="1.500" /></svg>
        </button>
        <div className="w-[13px] h-[50px] pl-[7px]"><div className="w-px h-full bg-[#555]" /></div>
      </div>
    </footer>
  );
}

/* ---------- page ---------- */

export default function App() {
  return (
    <div className={clsx("h-screen w-full flex flex-col overflow-hidden bg-[#f0f0f0]", UI)}>
      <TitleBar />
      <MenuBar />
      <Toolbars />
      <div className="flex-1 min-h-0 flex">
        <FavoritesPane />
        <Workspace />
        <aside className="w-[27px] ml-[3px] shrink-0 bg-[#fafafa] pt-1 pl-0.5 flex items-start">
          <button className={clsx("h-[136px] w-[25px] pr-1 bg-[#f0f0f0] border border-r-0 border-[#9a9a9a] rounded-l [writing-mode:vertical-rl] flex items-center justify-center text-[12px] leading-4 text-[#555]", MONO)}>
            Analysis Advisor
          </button>
        </aside>
      </div>
      <div className="h-6 shrink-0 border-t-2 border-b border-[#dcdcdc] flex">
        <div className="w-[83px] border-r border-[#d4d4d4]" />
        <div className="flex-1 border-r border-[#d4d4d4]" />
        <div className="w-[510px]" />
      </div>
      <Taskbar />
    </div>
  );
}
